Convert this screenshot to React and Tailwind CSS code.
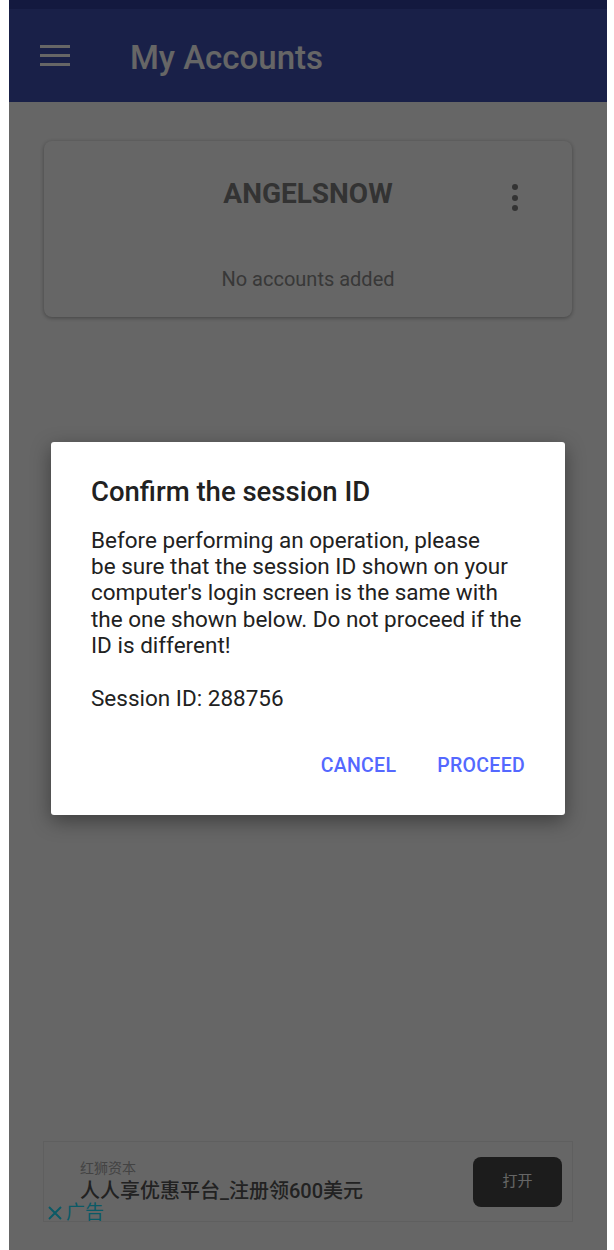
import { useState } from 'react'

const font = { fontFamily: 'Roboto, "Noto Sans CJK SC", sans-serif' }

function Menu() {
  return (
    <div className="flex flex-col gap-[6px] w-[30px]">
      <span className="block h-[3px] bg-white" />
      <span className="block h-[3px] bg-white" />
      <span className="block h-[3px] bg-white" />
    </div>
  )
}

function AccountCard({ name }) {
  return (
    <div className="relative h-[176px] rounded-lg bg-white shadow-[0_1px_4px_rgba(0,0,0,0.35)]">
      <div className="pt-[37px] text-center text-[28px] font-bold leading-[32px] text-[#808080]">{name}</div>
      <div className="absolute right-[54px] top-[43px] flex flex-col gap-[4.5px]">
        <span className="block h-[6px] w-[6px] rounded-full bg-[#808080]" />
        <span className="block h-[6px] w-[6px] rounded-full bg-[#808080]" />
        <span className="block h-[6px] w-[6px] rounded-full bg-[#808080]" />
      </div>
      <div className="pt-[57px] text-center text-[20px] leading-[24px] text-[#8c8c8c]">No accounts added</div>
    </div>
  )
}

function AdBanner() {
  return (
    <div className="relative mx-[34px] mb-[28px] flex h-[81px] items-center border border-[#eeeeee] bg-white pl-[36px] pr-[10px]">
      <div className="flex-1 -mt-[2px]">
        <div className="text-[14px] leading-[17px] text-[#a8a8a8]">红狮资本</div>
        <div className="mt-[3px] text-[20px] font-medium leading-[22px] text-[#555555]">人人享优惠平台_注册领600美元</div>
      </div>
      <button className="h-[50px] w-[89px] rounded-lg bg-[#464646] text-[15px] text-white">打开</button>
      <div className="absolute bottom-0 left-[3px] flex items-center gap-[3px] text-[19px] leading-[17px] text-[#19e0ff]">
        <svg width="16" height="16" viewBox="0 0 16 16" fill="none" stroke="currentColor" strokeWidth="2">
          <path d="M2 2 L14 14 M14 2 L2 14" />
        </svg>
        <span>广告</span>
      </div>
    </div>
  )
}

function SessionDialog({ sessionId }) {
  return (
    <div className="mt-[7px] w-[514px] rounded-[3px] bg-white px-[40px] pb-[32px] pt-[34px] shadow-[0_6px_20px_rgba(0,0,0,0.4)]">
      <h2 className="text-[27.5px] font-medium leading-[32px] text-[#212121]">Confirm the session ID</h2>
      <p className="mt-[19px] text-[22.5px] leading-[26.4px] text-[#212121]">
        Before performing an operation, please<br />
        be sure that the session ID shown on your<br />
        computer's login screen is the same with<br />
        the one shown below. Do not proceed if the<br />
        ID is different!
      </p>
      <p className="mt-[26.4px] text-[22.5px] leading-[26.4px] text-[#212121]">Session ID: {sessionId}</p>
      <div className="mt-[36px] flex justify-end gap-[41px]">
        <button className="h-[36px] text-[19.5px] font-medium tracking-[0.3px] text-[#5468ff]">CANCEL</button>
        <button className="h-[36px] text-[19.5px] font-medium tracking-[0.3px] text-[#5468ff]">PROCEED</button>
      </div>
    </div>
  )
}

export default function App() {
  const [open] = useState(true)

  return (
    <div className="flex h-[1250px] w-[614px] bg-white" style={font}>
      <div className="relative ml-[9px] flex w-[598px] flex-col overflow-hidden bg-white">
        <div className="h-[9px] bg-[#303f9f]" />
        <header className="flex h-[93px] items-center bg-[#3f51b5] pl-[31px]">
          <Menu />
          <h1 className="ml-[60px] mt-[4px] text-[33px] font-medium text-white">My Accounts</h1>
        </header>
        <main className="flex-1 px-[35px] pt-[39px]">
          <AccountCard name="ANGELSNOW" />
        </main>
        <AdBanner />
        {open && (
          <div className="absolute inset-0 flex items-center justify-center bg-black/60">
            <SessionDialog sessionId="288756" />
          </div>
        )}
      </div>
    </div>
  )
}
